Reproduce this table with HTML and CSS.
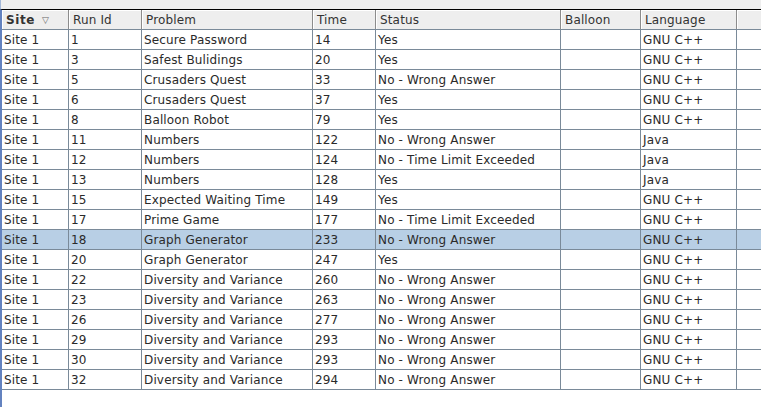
FILE: index.html
```html
<!DOCTYPE html>
<html>
<head>
<meta charset="utf-8">
<link rel="stylesheet" href="styles.css">
</head>
<body>
<div class="top"></div>
<div class="pane">
  <div class="grid head">
    <div class="hc"><b>Site</b><span class="sort">&#9661;</span></div>
    <div class="hc">Run Id</div>
    <div class="hc">Problem</div>
    <div class="hc">Time</div>
    <div class="hc">Status</div>
    <div class="hc">Balloon</div>
    <div class="hc">Language</div>
    <div class="hc last"></div>
  </div>
  <div class="grid row"><div>Site 1</div><div>1</div><div>Secure Password</div><div>14</div><div>Yes</div><div></div><div>GNU C++</div><div></div></div>
  <div class="grid row"><div>Site 1</div><div>3</div><div>Safest Bulidings</div><div>20</div><div>Yes</div><div></div><div>GNU C++</div><div></div></div>
  <div class="grid row"><div>Site 1</div><div>5</div><div>Crusaders Quest</div><div>33</div><div>No - Wrong Answer</div><div></div><div>GNU C++</div><div></div></div>
  <div class="grid row"><div>Site 1</div><div>6</div><div>Crusaders Quest</div><div>37</div><div>Yes</div><div></div><div>GNU C++</div><div></div></div>
  <div class="grid row"><div>Site 1</div><div>8</div><div>Balloon Robot</div><div>79</div><div>Yes</div><div></div><div>GNU C++</div><div></div></div>
  <div class="grid row"><div>Site 1</div><div>11</div><div>Numbers</div><div>122</div><div>No - Wrong Answer</div><div></div><div>Java</div><div></div></div>
  <div class="grid row"><div>Site 1</div><div>12</div><div>Numbers</div><div>124</div><div>No - Time Limit Exceeded</div><div></div><div>Java</div><div></div></div>
  <div class="grid row"><div>Site 1</div><div>13</div><div>Numbers</div><div>128</div><div>Yes</div><div></div><div>Java</div><div></div></div>
  <div class="grid row"><div>Site 1</div><div>15</div><div>Expected Waiting Time</div><div>149</div><div>Yes</div><div></div><div>GNU C++</div><div></div></div>
  <div class="grid row"><div>Site 1</div><div>17</div><div>Prime Game</div><div>177</div><div>No - Time Limit Exceeded</div><div></div><div>GNU C++</div><div></div></div>
  <div class="grid row sel"><div>Site 1</div><div>18</div><div>Graph Generator</div><div>233</div><div>No - Wrong Answer</div><div></div><div>GNU C++</div><div></div></div>
  <div class="grid row"><div>Site 1</div><div>20</div><div>Graph Generator</div><div>247</div><div>Yes</div><div></div><div>GNU C++</div><div></div></div>
  <div class="grid row"><div>Site 1</div><div>22</div><div>Diversity and Variance</div><div>260</div><div>No - Wrong Answer</div><div></div><div>GNU C++</div><div></div></div>
  <div class="grid row"><div>Site 1</div><div>23</div><div>Diversity and Variance</div><div>263</div><div>No - Wrong Answer</div><div></div><div>GNU C++</div><div></div></div>
  <div class="grid row"><div>Site 1</div><div>26</div><div>Diversity and Variance</div><div>277</div><div>No - Wrong Answer</div><div></div><div>GNU C++</div><div></div></div>
  <div class="grid row"><div>Site 1</div><div>29</div><div>Diversity and Variance</div><div>293</div><div>No - Wrong Answer</div><div></div><div>GNU C++</div><div></div></div>
  <div class="grid row"><div>Site 1</div><div>30</div><div>Diversity and Variance</div><div>293</div><div>No - Wrong Answer</div><div></div><div>GNU C++</div><div></div></div>
  <div class="grid row"><div>Site 1</div><div>32</div><div>Diversity and Variance</div><div>294</div><div>No - Wrong Answer</div><div></div><div>GNU C++</div><div></div></div>
</div>
</body>
</html>
```
FILE: styles.css
```css
html, body {
  margin: 0;
  padding: 0;
  height: 100%;
  background: #ffffff;
  overflow: hidden;
}
body {
  font-family: "DejaVu Sans", sans-serif;
  font-size: 12px;
  color: #333333;
}
.top {
  height: 9px;
  background: #eeeeee;
  border-left: 1px solid #a3b8d9;
}
.pane {
  border-top: 1px solid #000000;
  border-left: 2px solid #6382bf;
  height: 398px;
  box-sizing: border-box;
  background: #ffffff;
}
.grid {
  display: grid;
  grid-template-columns: 67px 73px 171px 63px 185px 80px 96px 1fr;
  height: 20px;
  box-sizing: border-box;
  border-bottom: 1px solid #7a8a99;
}
.grid > div {
  border-right: 1px solid #7a8a99;
  padding-left: 2px;
  padding-top: 2px;
  line-height: 17px;
  white-space: nowrap;
  overflow: hidden;
  letter-spacing: 0.15px;
}
.grid > div:last-child {
  border-right: none;
}
.head {
  background: #eeeeee;
}
.head .hc {
  border-right: 1px solid #8c8c8c;
  box-shadow: inset 1px 1px 0 #ffffff;
  padding-left: 4px;
  color: #333333;
}
.head .hc.last {
  border-right: none;
}
.head b {
  font-weight: bold;
  letter-spacing: 0.6px;
}
.sort {
  font-size: 9px;
  color: #666666;
  margin-left: 7px;
  vertical-align: 1px;
}
.row > div {
  color: #2a2a2a;
}
.sel {
  background: #b8cfe5;
}
```
